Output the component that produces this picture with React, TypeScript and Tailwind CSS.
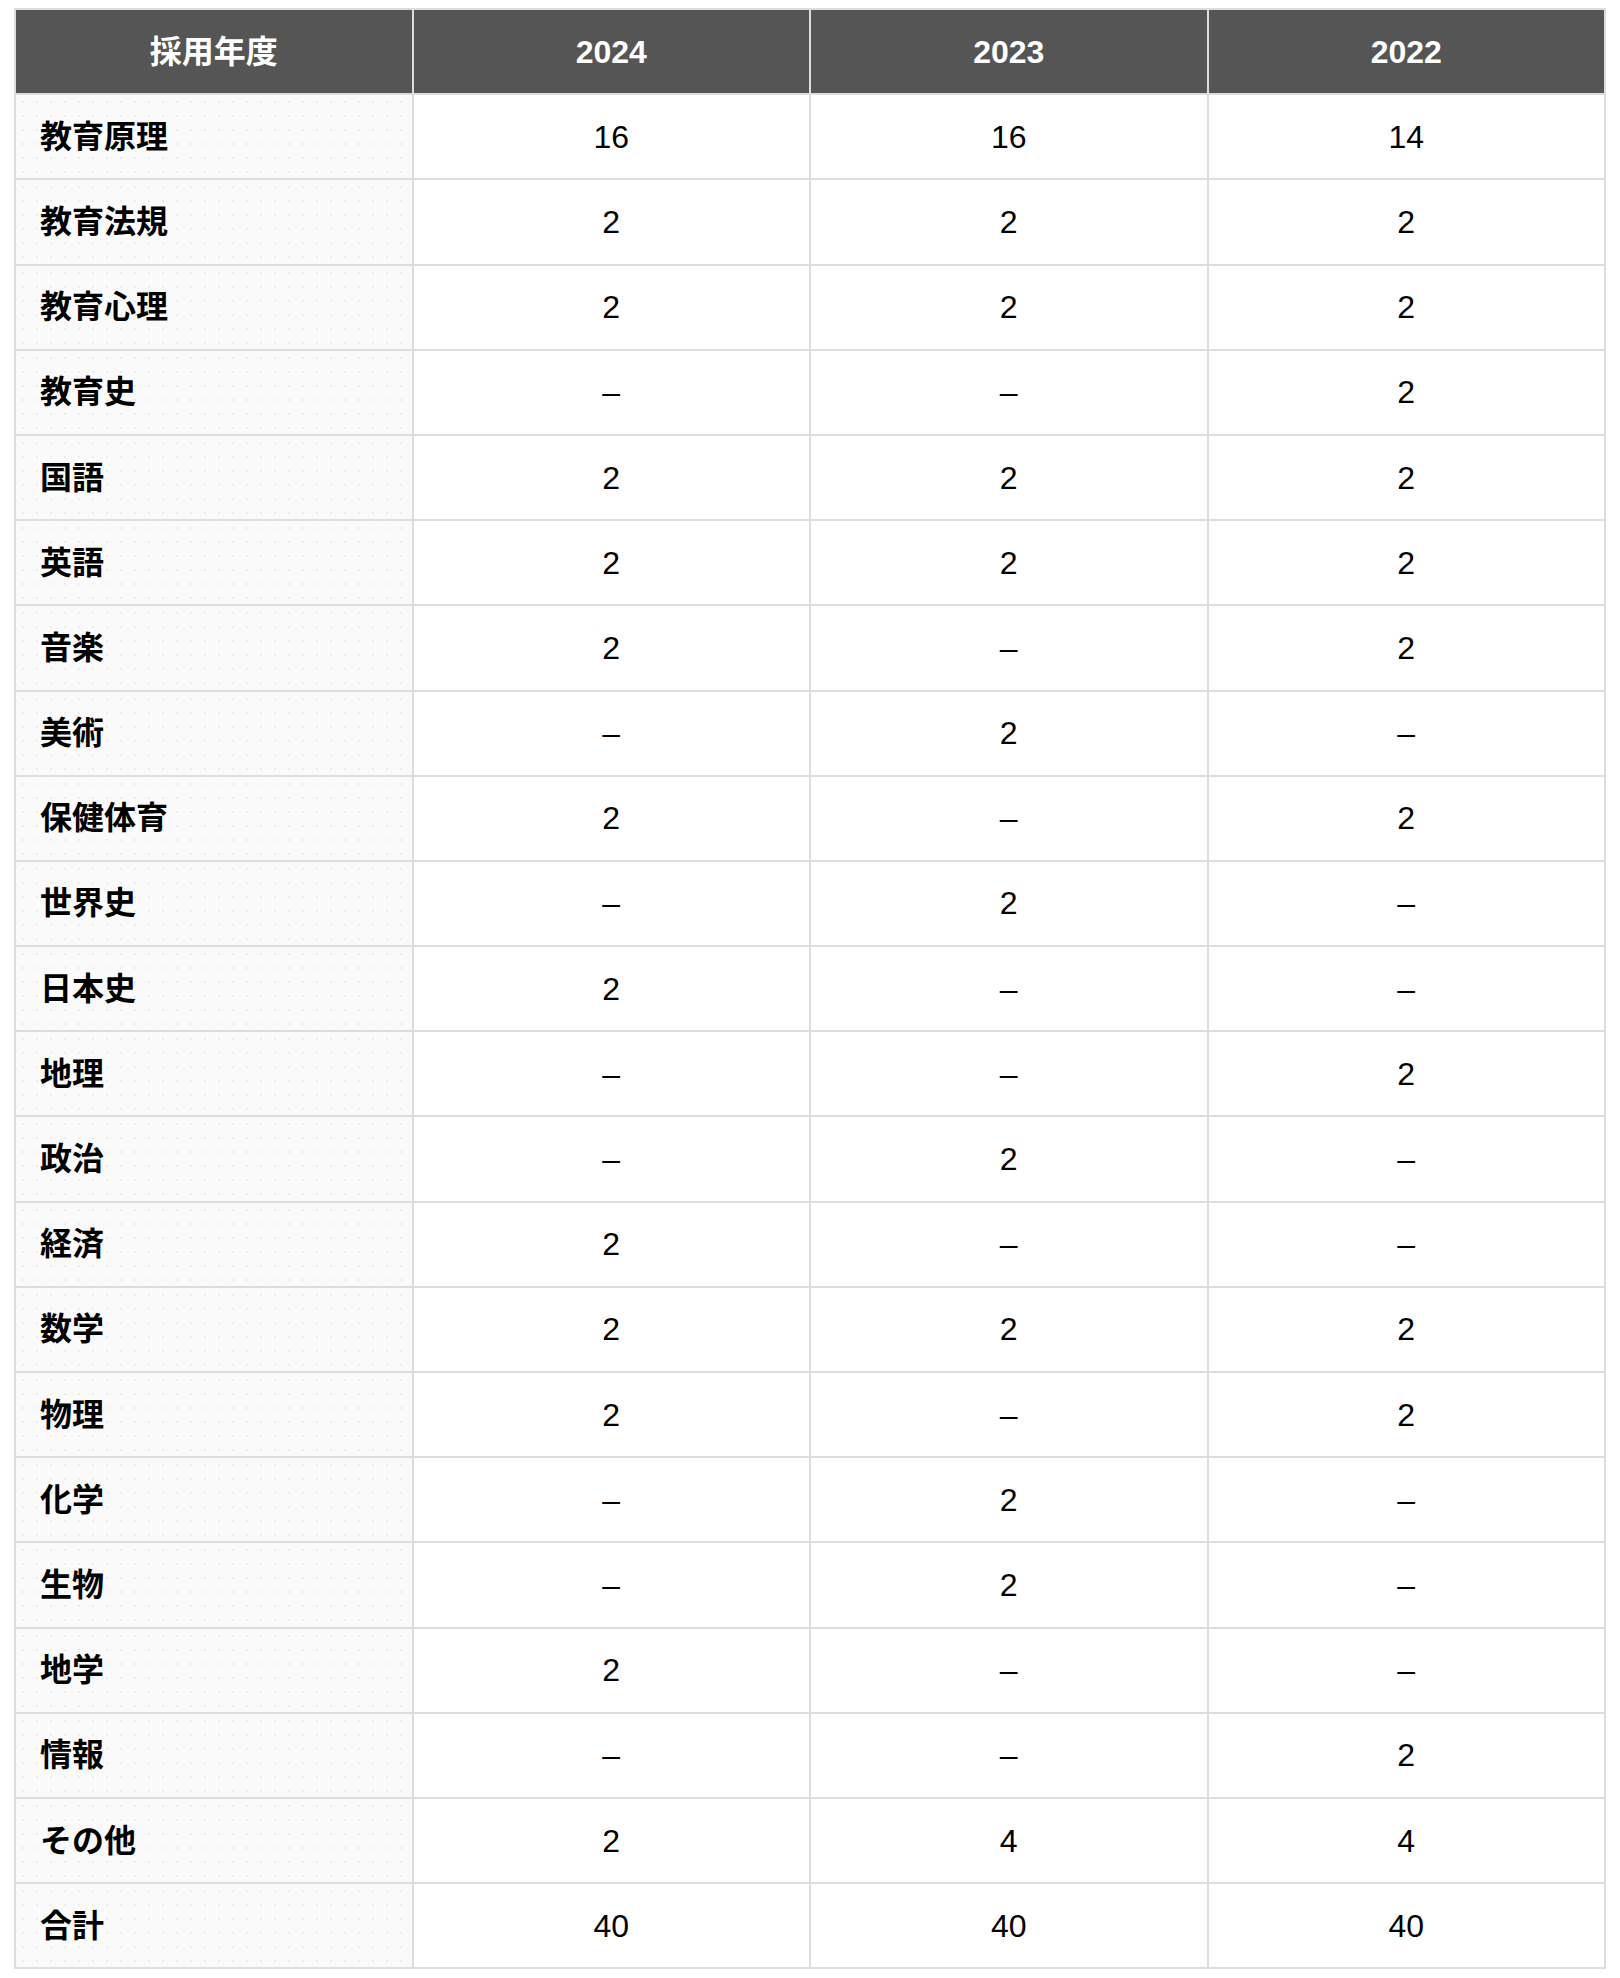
const rows: [string, string, string, string][] = [
  ["教育原理", "16", "16", "14"],
  ["教育法規", "2", "2", "2"],
  ["教育心理", "2", "2", "2"],
  ["教育史", "–", "–", "2"],
  ["国語", "2", "2", "2"],
  ["英語", "2", "2", "2"],
  ["音楽", "2", "–", "2"],
  ["美術", "–", "2", "–"],
  ["保健体育", "2", "–", "2"],
  ["世界史", "–", "2", "–"],
  ["日本史", "2", "–", "–"],
  ["地理", "–", "–", "2"],
  ["政治", "–", "2", "–"],
  ["経済", "2", "–", "–"],
  ["数学", "2", "2", "2"],
  ["物理", "2", "–", "2"],
  ["化学", "–", "2", "–"],
  ["生物", "–", "2", "–"],
  ["地学", "2", "–", "–"],
  ["情報", "–", "–", "2"],
  ["その他", "2", "4", "4"],
  ["合計", "40", "40", "40"],
];

const years = ["2024", "2023", "2022"];

export default function App() {
  return (
    <div className="bg-white px-[14px] pt-[8px] pb-[10px] font-['Liberation_Sans','Noto_Sans_CJK_JP',sans-serif] text-[32px] leading-none text-black">
      <table className="w-[1592px] table-fixed border-collapse border-2 border-[#ddd]">
        <thead>
          <tr>
            <th className="h-[85.2px] w-1/4 border-2 border-[#ddd] bg-[#555] text-center font-bold text-white">
              採用年度
            </th>
            {years.map((y) => (
              <th
                key={y}
                className="h-[85.2px] w-1/4 border-2 border-[#ddd] bg-[#555] text-center font-bold text-white"
              >
                {y}
              </th>
            ))}
          </tr>
        </thead>
        <tbody>
          {rows.map(([label, a, b, c]) => (
            <tr key={label}>
              <td className="h-[85.2px] border-2 border-[#ddd] bg-[#fafafa] bg-[radial-gradient(#ececec_1px,transparent_1px)] bg-[length:14px_14px] pl-[24px] text-left font-bold">
                {label}
              </td>
              <td className="h-[85.2px] border-2 border-[#ddd] text-center">{a}</td>
              <td className="h-[85.2px] border-2 border-[#ddd] text-center">{b}</td>
              <td className="h-[85.2px] border-2 border-[#ddd] text-center">{c}</td>
            </tr>
          ))}
        </tbody>
      </table>
    </div>
  );
}
